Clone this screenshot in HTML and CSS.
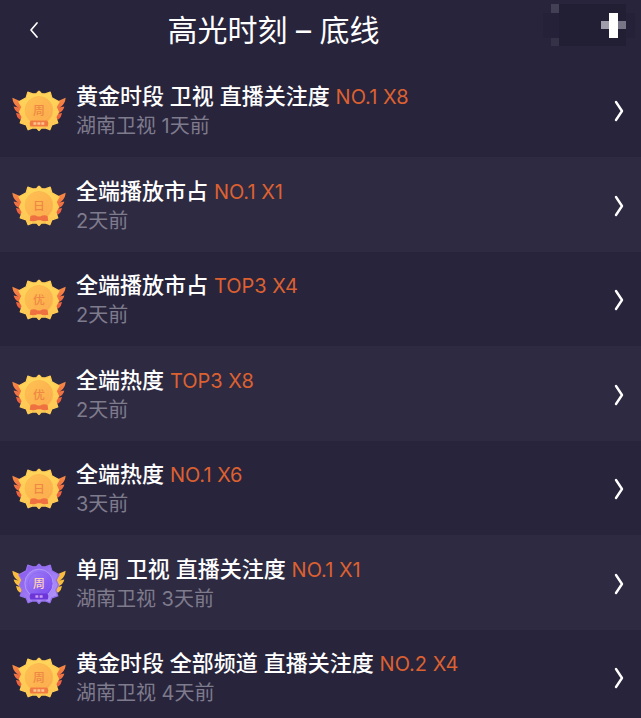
FILE: index.html
```
<!DOCTYPE html>
<html lang="zh-CN">
<head>
  <meta charset="utf-8">
  <meta name="viewport" content="width=device-width, initial-scale=1">
  <title>高光时刻 – 底线</title>
  <link rel="stylesheet" href="styles.css">
</head>
<body>
  <!-- shared badge and arrow shapes -->
  <svg class="sprite" aria-hidden="true">
    <defs>
      <linearGradient id="goldFill" x1="0" y1="0" x2="0" y2="1">
        <stop offset="0" stop-color="#ffd65c"/>
        <stop offset="1" stop-color="#ffc653"/>
      </linearGradient>
      <linearGradient id="goldDisc" x1="0" y1="0" x2="1" y2="1">
        <stop offset="0" stop-color="#ffc251"/>
        <stop offset="1" stop-color="#fba94e"/>
      </linearGradient>
      <linearGradient id="wingFill" x1="0" y1="0" x2="0" y2="1">
        <stop offset="0" stop-color="#f78a45"/>
        <stop offset="1" stop-color="#ea5940"/>
      </linearGradient>
      <linearGradient id="purpleFill" x1="0" y1="0" x2="1" y2="1">
        <stop offset="0" stop-color="#8454ec"/>
        <stop offset="1" stop-color="#b69cf8"/>
      </linearGradient>
      <linearGradient id="purpleDisc" x1="0" y1="0" x2="1" y2="1">
        <stop offset="0" stop-color="#a487f7"/>
        <stop offset="1" stop-color="#7642ee"/>
      </linearGradient>
      <path id="wing" d="M1 22 L24 32 L42 40 L42 90 L22 87 Q14 80 12 68 L24 70 L20 67 Q8 61 5 48 L20 51 L14 48 Q3 40 1 22Z"/>
      <path id="star" d="M82 1 L89 9 L101 10 L116 5 L121 22 L143 34 L134 50 L141 65 L133 80 L139 98 L121 104 L115 119 L101 113 L89 114 L82 121 L75 114 L63 113 L49 119 L43 104 L25 98 L31 80 L23 65 L30 50 L21 34 L43 22 L48 5 L63 10 L75 9Z"/>
      <symbol id="badge-gold" viewBox="0 0 164 124">
        <g fill="url(#wingFill)">
          <use href="#wing"/>
          <use href="#wing" transform="translate(164 0) scale(-1 1)"/>
        </g>
        <use href="#star" fill="url(#goldFill)" stroke="#ffcd55" stroke-width="4" stroke-linejoin="round"/>
        <circle cx="82" cy="60" r="42" fill="url(#goldDisc)" stroke="#fbb950" stroke-width="3"/>
        <circle cx="82" cy="60" r="33" fill="none" stroke="#fdb955" stroke-width="2"/>
      </symbol>
      <symbol id="badge-purple" viewBox="0 0 164 124">
        <g fill="#f8bd3e">
          <use href="#wing"/>
          <use href="#wing" transform="translate(164 0) scale(-1 1)"/>
        </g>
        <use href="#star" fill="url(#purpleFill)" stroke="#9570ef" stroke-width="4" stroke-linejoin="round"/>
        <circle cx="82" cy="60" r="43" fill="url(#purpleDisc)" stroke="#b39afa" stroke-width="3"/>
        <circle cx="82" cy="60" r="33" fill="none" stroke="#8b62f0" stroke-width="2"/>
      </symbol>
      <symbol id="ribbon" viewBox="0 0 164 124">
        <path d="M57 91 H107 Q113 99 108 109 H56 Q51 99 57 91Z"/>
      </symbol>
      <symbol id="ribbon-bow" viewBox="0 0 164 124">
        <path d="M56 92 Q69 88 78 94 H86 Q95 88 108 92 L110 107 Q96 110 87 105 H77 Q68 110 54 107Z"/>
      </symbol>
      <symbol id="arrow" viewBox="0 0 10 22">
        <path d="M2 2 L8 11 L2 20" fill="none" stroke="#fff" stroke-width="2.4" stroke-linecap="round" stroke-linejoin="round"/>
      </symbol>
    </defs>
  </svg>

  <header class="header">
    <button class="back" type="button" aria-label="返回">
      <svg width="10" height="18" viewBox="0 0 10 18"><path d="M8 2 L2 9 L8 16" fill="none" stroke="#fff" stroke-width="1.7" stroke-linecap="round" stroke-linejoin="round"/></svg>
    </button>
    <h1 class="title">高光时刻 – 底线</h1>
    <button class="action" type="button" aria-label="添加">
      <svg width="92" height="42" viewBox="0 0 92 42" shape-rendering="crispEdges">
        <path d="M16 0H83V42H16Z" fill="#221e34"/>
        <path d="M0 9H16V34H0ZM83 9H92V34H83Z" fill="#252138"/>
        <path d="M8 0H16V9H8Z" fill="#433f54"/>
        <path d="M8 34H16V42H8Z" fill="#353147"/>
        <path d="M58 17H66V25H58Z" fill="#a09eaa"/>
        <path d="M75 17H83V25H75Z" fill="#787587"/>
        <path d="M66 9H75V34H66Z" fill="#fff"/>
      </svg>
    </button>
  </header>

  <ul class="list">
    <li class="row">
      <a class="row-link" href="#">
        <svg class="badge" viewBox="0 0 164 124"><use href="#badge-gold"/><use href="#ribbon" fill="#f17a43"/><text class="mark" x="82" y="74">周</text><path d="M65 100H99" stroke="#ffc38c" stroke-width="7" stroke-dasharray="9 3"/></svg>
        <div class="info">
          <p class="name">黄金时段 卫视 直播关注度 <span class="rank">NO.1 X8</span></p>
          <p class="meta">湖南卫视 1天前</p>
        </div>
        <svg class="arrow"><use href="#arrow"/></svg>
      </a>
    </li>
    <li class="row">
      <a class="row-link" href="#">
        <svg class="badge" viewBox="0 0 164 124"><use href="#badge-gold"/><use href="#ribbon-bow" fill="#ef7040"/><text class="mark" x="82" y="74">日</text></svg>
        <div class="info">
          <p class="name">全端播放市占 <span class="rank">NO.1 X1</span></p>
          <p class="meta">2天前</p>
        </div>
        <svg class="arrow"><use href="#arrow"/></svg>
      </a>
    </li>
    <li class="row">
      <a class="row-link" href="#">
        <svg class="badge" viewBox="0 0 164 124"><use href="#badge-gold"/><use href="#ribbon-bow" fill="#ef7040"/><text class="mark" x="82" y="74">优</text></svg>
        <div class="info">
          <p class="name">全端播放市占 <span class="rank">TOP3 X4</span></p>
          <p class="meta">2天前</p>
        </div>
        <svg class="arrow"><use href="#arrow"/></svg>
      </a>
    </li>
    <li class="row">
      <a class="row-link" href="#">
        <svg class="badge" viewBox="0 0 164 124"><use href="#badge-gold"/><use href="#ribbon-bow" fill="#ef7040"/><text class="mark" x="82" y="74">优</text></svg>
        <div class="info">
          <p class="name">全端热度 <span class="rank">TOP3 X8</span></p>
          <p class="meta">2天前</p>
        </div>
        <svg class="arrow"><use href="#arrow"/></svg>
      </a>
    </li>
    <li class="row">
      <a class="row-link" href="#">
        <svg class="badge" viewBox="0 0 164 124"><use href="#badge-gold"/><use href="#ribbon-bow" fill="#ef7040"/><text class="mark" x="82" y="74">日</text></svg>
        <div class="info">
          <p class="name">全端热度 <span class="rank">NO.1 X6</span></p>
          <p class="meta">3天前</p>
        </div>
        <svg class="arrow"><use href="#arrow"/></svg>
      </a>
    </li>
    <li class="row">
      <a class="row-link" href="#">
        <svg class="badge" viewBox="0 0 164 124"><use href="#badge-purple"/><use href="#ribbon" fill="#6c35d8"/><text class="mark mark-light" x="82" y="74">周</text><path d="M71 100H93" stroke="#c99af0" stroke-width="7" stroke-dasharray="9 4"/></svg>
        <div class="info">
          <p class="name">单周 卫视 直播关注度 <span class="rank">NO.1 X1</span></p>
          <p class="meta">湖南卫视 3天前</p>
        </div>
        <svg class="arrow"><use href="#arrow"/></svg>
      </a>
    </li>
    <li class="row">
      <a class="row-link" href="#">
        <svg class="badge" viewBox="0 0 164 124"><use href="#badge-gold"/><use href="#ribbon" fill="#f17a43"/><text class="mark" x="82" y="74">周</text><path d="M65 100H99" stroke="#ffc38c" stroke-width="7" stroke-dasharray="9 3"/></svg>
        <div class="info">
          <p class="name">黄金时段 全部频道 直播关注度 <span class="rank">NO.2 X4</span></p>
          <p class="meta">湖南卫视 4天前</p>
        </div>
        <svg class="arrow"><use href="#arrow"/></svg>
      </a>
    </li>
  </ul>
</body>
</html>
```
FILE: styles.css
```
:root {
  --bg: #28243c;
  --bg-alt: #2e2a42;
  --accent: #dd6130;
  --muted: #7e7b8c;
}

* {
  box-sizing: border-box;
}

body {
  margin: 0;
  background: var(--bg);
  color: #fff;
  font-family: Inter, "Noto Sans CJK SC", sans-serif;
}

.sprite {
  display: block;
  width: 0;
  height: 0;
}

.header {
  display: grid;
  grid-template-columns: 92px 1fr 92px;
  align-items: start;
  height: 63px;
  padding: 4px 6px 0 0;
}

.back,
.action {
  display: flex;
  align-items: center;
  padding: 0;
  border: none;
  background: none;
  cursor: pointer;
}

.back {
  height: 52px;
  padding-left: 29px;
}

.title {
  margin: 0;
  padding-right: 88px;
  font-size: 30px;
  font-weight: 400;
  line-height: 52px;
  text-align: center;
  white-space: nowrap;
}

.list {
  margin: 0;
  padding: 0;
  list-style: none;
}

.row:nth-child(even) {
  background: var(--bg-alt);
  border-top: 1px solid var(--bg-alt);
}

.row-link {
  display: flex;
  align-items: center;
  padding: 19px 17px 17px 12px;
  color: inherit;
  text-decoration: none;
}

.row:last-child .row-link {
  padding-bottom: 11px;
}

.badge {
  flex: none;
  width: 54px;
  height: 42px;
  margin-right: 10px;
}

.mark {
  fill: #ee8844;
  font-size: 36px;
  font-weight: 500;
  text-anchor: middle;
}

.mark-light {
  fill: #ffd3b8;
}

.info {
  display: flex;
  flex: 1;
  flex-direction: column;
  gap: 2px;
  min-width: 0;
}

.name,
.meta {
  margin: 0;
  line-height: 28px;
}

.name {
  font-size: 22px;
  font-weight: 500;
}

.rank {
  color: var(--accent);
  font-size: 20px;
  font-weight: 400;
  line-height: 20px;
}

.meta {
  color: var(--muted);
  font-size: 20px;
  font-weight: 400;
}

.arrow {
  flex: none;
  width: 10px;
  height: 22px;
}
```
